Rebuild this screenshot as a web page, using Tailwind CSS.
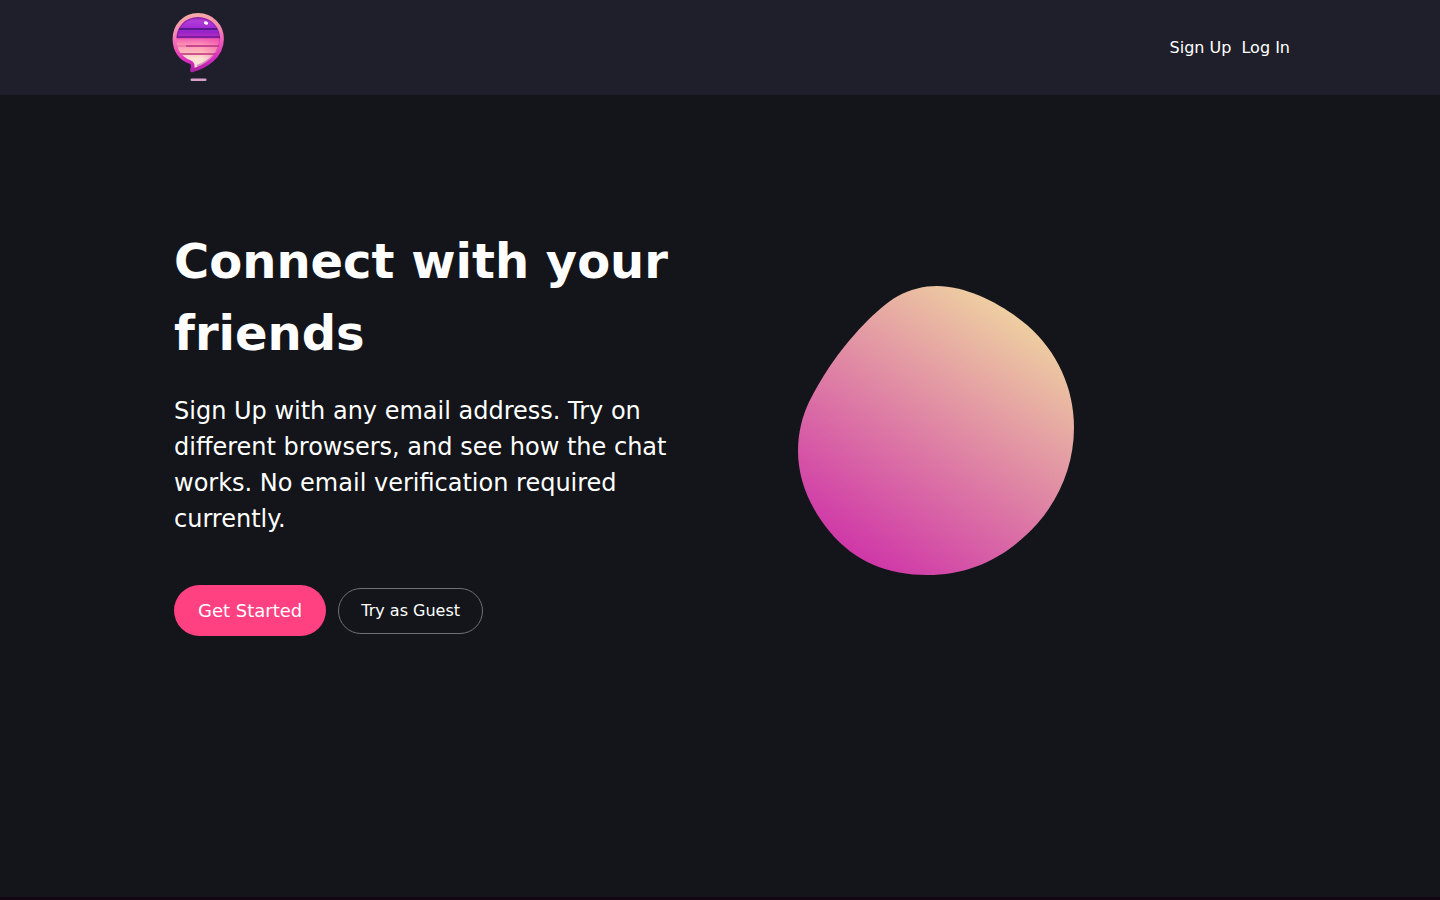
<!DOCTYPE html>
<html lang="en">
<head>
  <meta charset="UTF-8" />
  <meta name="viewport" content="width=device-width, initial-scale=1.0"/>
  <title>Chat</title>
  <script src="https://cdn.jsdelivr.net/npm/@tailwindcss/browser@4"></script>
</head>
<body class="min-h-screen flex flex-col bg-[#13151a] text-white font-['DejaVu_Sans',sans-serif]">
  <header class="bg-[#1f1f2b]">
    <div class="max-w-[1140px] h-[95px] mx-auto flex items-center justify-between">
      <a href="/" aria-label="Home" class="pl-[22px]">
        <svg class="w-[53px] h-[70px]" viewBox="0 0 53 70" fill="none">
          <defs>
            <linearGradient id="ring" x1="16" y1="0" x2="24" y2="60" gradientUnits="userSpaceOnUse">
              <stop offset="0" stop-color="#f8aca6" />
              <stop offset=".3" stop-color="#f58bb0" />
              <stop offset=".6" stop-color="#ee4fba" />
              <stop offset=".8" stop-color="#d62cc0" />
              <stop offset="1" stop-color="#a3209f" />
            </linearGradient>
            <linearGradient id="bands" x1="0" y1="3" x2="0" y2="56" gradientUnits="userSpaceOnUse">
              <stop offset="0" stop-color="#9a2ac2" />
              <stop offset=".1" stop-color="#b03ad8" />
              <stop offset=".22" stop-color="#a42bd4" />
              <stop offset=".3" stop-color="#9424c8" />
              <stop offset=".39" stop-color="#b52cc6" />
              <stop offset=".44" stop-color="#f265b4" />
              <stop offset=".55" stop-color="#ff94b4" />
              <stop offset=".68" stop-color="#ffb9ba" />
              <stop offset=".8" stop-color="#ffe3d4" />
              <stop offset="1" stop-color="#ffe0d4" />
            </linearGradient>
            <linearGradient id="shade" x1="10" y1="0" x2="49" y2="0" gradientUnits="userSpaceOnUse">
              <stop offset=".5" stop-color="#ee3fae" stop-opacity="0" />
              <stop offset="1" stop-color="#ee3fae" stop-opacity=".5" />
            </linearGradient>
            <clipPath id="bubble">
              <path d="M26 2C12 2 2.500 13 2.500 26C2.500 38 9 46 18 49C21 50 21.500 52 20 57.500C33 54 50 44 50 26C50 13 40 2 26 2Z" />
            </clipPath>
          </defs>
          <g clip-path="url(#bubble)">
            <rect width="53" height="62" fill="url(#bands)" />
            <rect y="24" width="53" height="38" fill="url(#shade)" />
            <rect y="15" width="53" height="2" fill="#5a188f" />
            <rect y="23" width="53" height="2" fill="#7f1c9c" />
            <rect x="14" y="32" width="39" height="2" fill="#c8468f" />
            <rect y="32" width="14" height="2" fill="#f07ba6" />
            <rect x="7" y="40" width="40" height="2" fill="#cc5590" />
            <path d="M5 24C5 13 14 4.500 26 4.500C39 4.500 48 13 48 26" stroke="#7b168e" stroke-opacity=".6" stroke-width="2" />
            <path d="M48 26C48 39 38 48 25 53" stroke="#a3209f" stroke-opacity=".4" stroke-width="2" />
          </g>
          <path d="M26 2C12 2 2.500 13 2.500 26C2.500 38 9 46 18 49C21 50 21.500 52 20 57.500C33 54 50 44 50 26C50 13 40 2 26 2Z" stroke="url(#ring)" stroke-width="3.800" stroke-linejoin="round" />
          <ellipse cx="34" cy="10" rx="2.200" ry="1.600" fill="#fff" transform="rotate(20 34 10)" />
          <rect x="18.500" y="65.500" width="16" height="2.600" rx="1.300" fill="#d9a0cb" />
        </svg>
      </a>
      <nav class="flex gap-[10px]">
        <a href="/signup" class="hover:underline">Sign Up</a>
        <a href="/login" class="hover:underline">Log In</a>
      </nav>
    </div>
  </header>

  <main class="flex-1 w-full max-w-[1140px] mx-auto py-[130px]">
    <div class="grid grid-cols-2 items-center">
      <div class="px-6">
        <h1 class="text-5xl leading-[72px] font-bold">Connect with your friends</h1>
        <p class="mt-6 text-2xl leading-9">
          Sign Up with any email address. Try on different browsers, and see how the chat works. No email verification required currently.
        </p>
        <div class="mt-12 flex items-center gap-3">
          <button type="button" class="px-6 py-3 rounded-full bg-[#ff4081] text-lg leading-[27px] hover:bg-[#f03273]">Get Started</button>
          <button type="button" class="px-[22px] py-[10px] rounded-full border border-[#6e7076] leading-6 hover:bg-white/10">Try as Guest</button>
        </div>
      </div>
      <div class="pl-[78px]">
        <svg class="w-[276px] h-[290px]" viewBox="0 0 276 290" aria-hidden="true">
          <defs>
            <linearGradient id="blob" x1="55" y1="280" x2="221" y2="30" gradientUnits="userSpaceOnUse">
              <stop offset="0" stop-color="#ce32a8" />
              <stop offset="1" stop-color="#eecfa1" />
            </linearGradient>
          </defs>
          <path fill="url(#blob)" d="M139 0C169 0 204 18 229 39C259 65 276 102 276 142C276 176 263 211 239 238C208 272 172 289 129 289C90 289 57 276 32 246C12 222 0 194 0 165C0 147 4 131 11 116C17 104 24 92 32 80C50 53 80 21 100 10C113 3 126 0 139 0Z" />
        </svg>
      </div>
    </div>
  </main>

  <footer class="h-[3px] bg-[#120712]"></footer>
</body>
</html>
